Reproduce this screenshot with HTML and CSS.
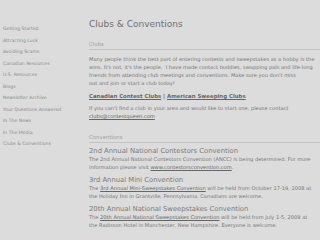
FILE: index.html
```html
<!DOCTYPE html>
<html>
<head>
<meta charset="utf-8">
<link rel="stylesheet" href="styles.css">
</head>
<body>
<div class="page">
  <nav class="side">
    <a class="nav-item">Getting Started</a>
    <a class="nav-item">Attracting Luck</a>
    <a class="nav-item">Avoiding Scams</a>
    <a class="nav-item">Canadian Resources</a>
    <a class="nav-item">U.S. Resources</a>
    <a class="nav-item">Blogs</a>
    <a class="nav-item">Newsletter Archive</a>
    <a class="nav-item">Your Questions Answered</a>
    <a class="nav-item">In The News</a>
    <a class="nav-item">In The Media</a>
    <a class="nav-item">Clubs &amp; Conventions</a>
  </nav>
  <main class="main">
    <h1 class="title">Clubs &amp; Conventions</h1>
    <h2 class="section">Clubs</h2>
    <p class="text">Many people think the best part of entering contests and sweepstakes as a hobby is the wins. It's not, it's the people.&nbsp; I have made contact buddies, swapping pals and life-long friends from attending club meetings and conventions. Make sure you don't miss out&nbsp;and&nbsp;join or start a club today!</p>
    <p class="clubs"><a class="link">Canadian Contest Clubs</a> | <a class="link">American Sweeping Clubs</a></p>
    <p class="text after-clubs">If you can't find a club in your area and would like to start one, please contact <a class="link plain">clubs@contestqueen.com</a></p>
    <h2 class="section conv">Conventions</h2>
    <h3 class="event">2nd Annual National Contestors Convention</h3>
    <p class="text">The 2nd Annual National Contestors Convention (ANCC) is being determined. For more information please visit <a class="link plain">www.contestorsconvention.com</a>.</p>
    <h3 class="event">3rd Annual Mini Convention</h3>
    <p class="text">The <a class="link plain">3rd Annual Mini-Sweepstakes Convention</a> will be held from October 17-19, 2008 at the Holiday Inn in Grantville, Pennsylvania. Canadians are welcome.</p>
    <h3 class="event">20th Annual National Sweepstakes Convention</h3>
    <p class="text">The <a class="link plain">20th Annual National Sweepstakes Convention</a> will be held from July 1-5, 2009 at the Radisson Hotel in Manchester, New Hampshire. Everyone is welcome.</p>
  </main>
</div>
</body>
</html>
```
FILE: styles.css
```css
html, body {
  margin: 0;
  padding: 0;
  background: #dcdcdc;
  width: 320px;
  height: 240px;
  overflow: hidden;
  font-family: "DejaVu Sans", Verdana, sans-serif;
}
.page {
  display: flex;
  align-items: flex-start;
}
.side {
  width: 80px;
  flex: none;
  display: flex;
  flex-direction: column;
  padding-top: 23px;
}
.nav-item {
  display: block;
  font-size: 4.6px;
  line-height: 11.5px;
  height: 11.5px;
  padding-left: 3px;
  color: #8a8a8a;
}
.main {
  flex: 1;
  padding: 18px 4px 0 9px;
  color: #6e6e6e;
}
.title {
  margin: 0;
  font-size: 9px;
  font-weight: normal;
  line-height: 13px;
  color: #707070;
}
.section {
  margin: 10px -4px 0 0;
  font-size: 5.4px;
  font-weight: normal;
  line-height: 7px;
  color: #a0a0a0;
  border-bottom: 1px solid #c4c4c4;
  padding-bottom: 1px;
}
.section.conv {
  margin-top: 14px;
}
.text {
  margin: 5px 0 0 0;
  font-size: 5.1px;
  line-height: 8px;
  color: #777;
}
.text.after-clubs {
  margin-top: 3px;
}
.clubs {
  margin: 5px 0 0 0;
  font-size: 5.4px;
  line-height: 9px;
  font-weight: bold;
  color: #666;
}
.link {
  text-decoration: underline;
  color: #666;
}
.link.plain {
  font-weight: normal;
}
.event {
  margin: 5px 0 -1px 0;
  font-size: 6.8px;
  font-weight: normal;
  line-height: 9px;
  color: #7a7a7a;
}
.section + .event {
  margin-top: 4px;
}
.event + .text {
  margin-top: 0;
}
```
